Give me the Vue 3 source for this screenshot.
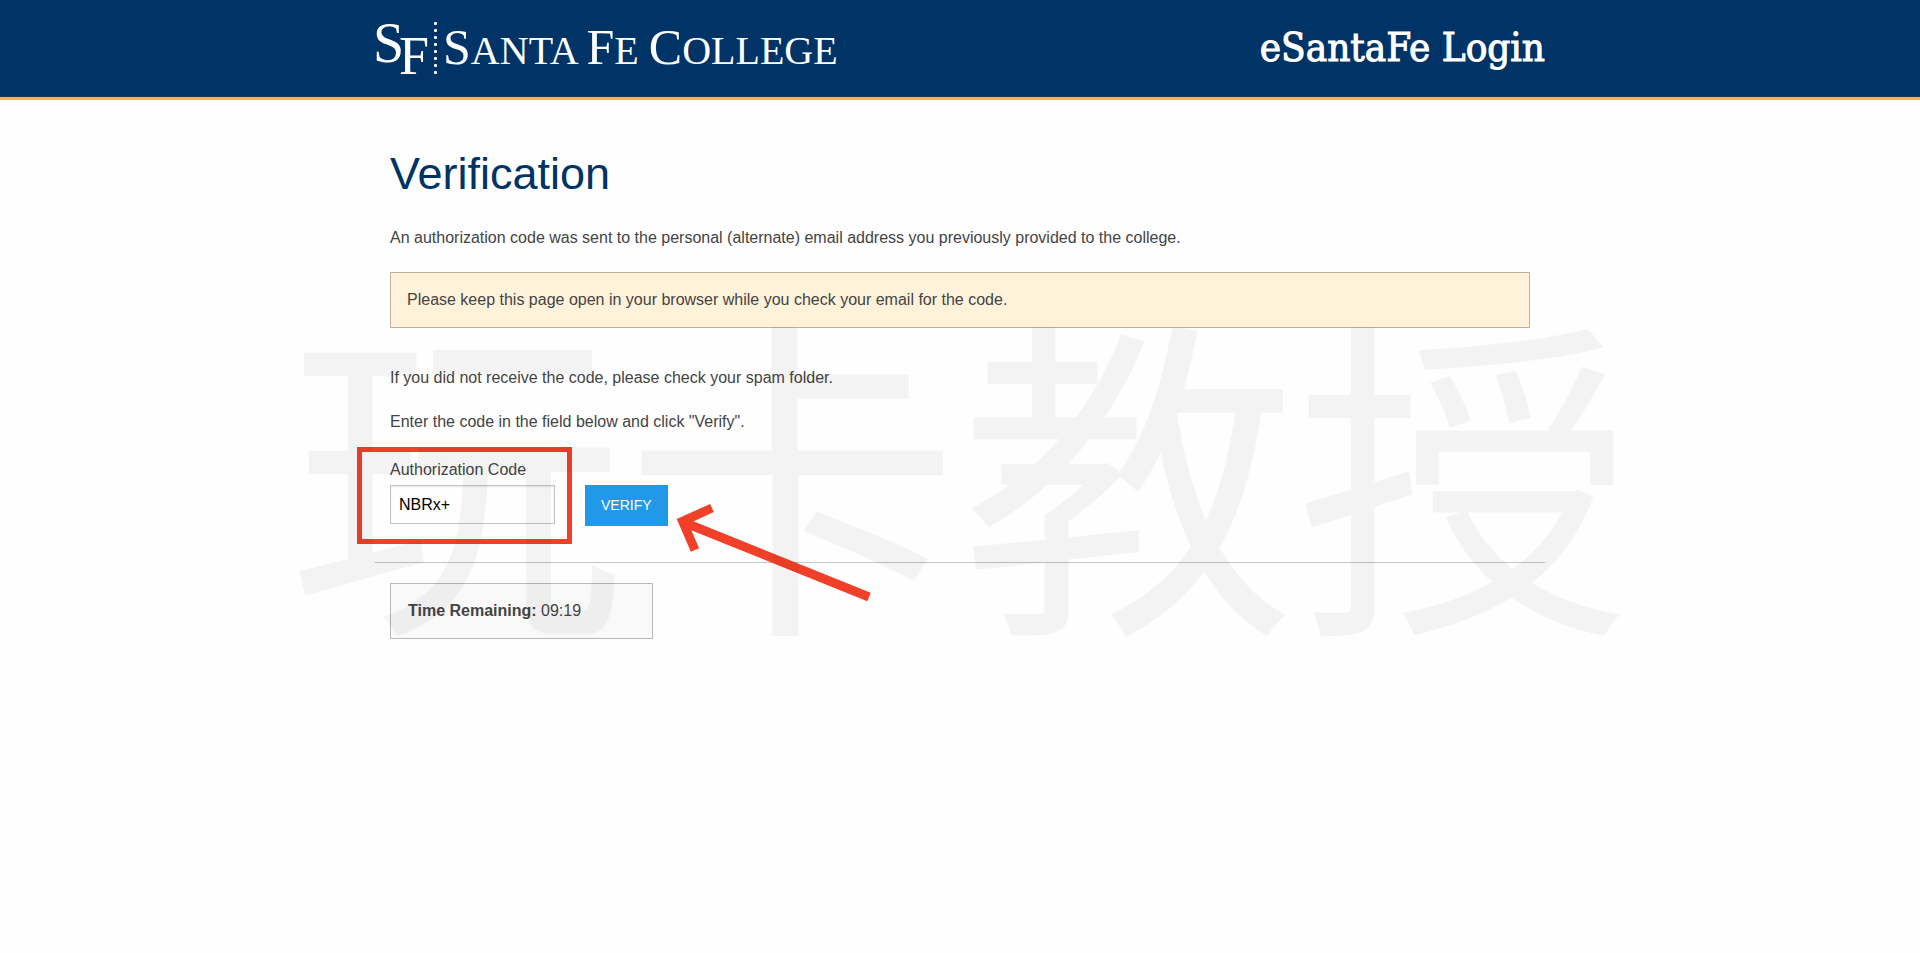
<script setup>
import { ref } from 'vue'

const code = ref('NBRx+')
const remaining = ref('09:19')
const dots = [0, 1, 2, 3, 4, 5, 6, 7]
</script>

<template>
  <div class="page">
    <header class="top">
      <div class="container top-row">
        <a class="logo" href="#" aria-label="Santa Fe College">
          <span class="mono-s">S</span><span class="mono-f">F</span>
          <span class="dots"><i v-for="d in dots" :key="d"></i></span>
          <span class="wordmark"><b>S</b>ANTA <b>F</b>E <b>C</b>OLLEGE</span>
        </a>
        <div class="site-title">eSantaFe Login</div>
      </div>
    </header>

    <main class="container">
      <div class="content">
        <h1>Verification</h1>
        <p>An authorization code was sent to the personal (alternate) email address you previously provided to the college.</p>
        <div class="alert">Please keep this page open in your browser while you check your email for the code.</div>
        <p>If you did not receive the code, please check your spam folder.</p>
        <p>Enter the code in the field below and click "Verify".</p>
        <form class="verify-form" @submit.prevent>
          <div class="field">
            <label for="code">Authorization Code</label>
            <input id="code" v-model="code" type="text" />
          </div>
          <button type="submit">VERIFY</button>
          <div class="highlight"></div>
          <svg class="arrow" width="210" height="110" viewBox="0 0 210 110" aria-hidden="true">
            <path d="M42 11L12.600 24.300L25 53M13 25L199 100" fill="none" />
          </svg>
        </form>
      </div>
      <hr />
      <div class="content">
        <div class="timer"><strong>Time Remaining:</strong> {{ remaining }}</div>
      </div>
    </main>

    <div class="watermark" aria-hidden="true">玩卡教授</div>
  </div>
</template>

<style>
body {
  margin: 0;
  background: #fefefe;
}
</style>

<style scoped>
.page {
  position: relative;
  overflow: hidden;
  min-height: 100vh;
  font: 16px/24px "Liberation Sans", Arial, sans-serif;
  color: #444;
}
.container {
  box-sizing: border-box;
  max-width: 1170px;
  margin: 0 auto;
}
.top {
  background: #003366;
  border-bottom: 3px solid #e9b949;
  box-shadow: inset 0 -1px 0 #24393e;
}
.top-row {
  display: flex;
  justify-content: space-between;
  align-items: flex-start;
  height: 97px;
}
.logo {
  display: flex;
  margin-left: -2px;
  padding-top: 17px;
  color: #fff;
  font-family: "Liberation Serif", "Times New Roman", serif;
  line-height: 60px;
  text-decoration: none;
}
.mono-s {
  width: 26px;
  font-size: 56px;
  line-height: 52px;
}
.mono-f {
  font-size: 54px;
  line-height: 78px;
}
.dots {
  display: flex;
  flex-direction: column;
  gap: 4px;
  padding-top: 5px;
  margin: 0 6px 0 5px;
}
.dots i {
  width: 3px;
  height: 3px;
  border-radius: 1px;
  background: #fff;
}
.wordmark {
  font-size: 40px;
  white-space: nowrap;
}
.wordmark b {
  font-size: 50px;
  font-weight: 400;
}
.site-title {
  padding-top: 17px;
  color: #fff;
  font-family: "DejaVu Serif Condensed", "DejaVu Serif", serif;
  font-size: 40px;
  line-height: 60px;
  white-space: nowrap;
  -webkit-text-stroke: 1px #fff;
}
.content {
  padding: 0 15px;
}
h1 {
  margin: 0;
  padding: 49px 0 27px;
  color: #003366;
  font-size: 45px;
  font-weight: 400;
  line-height: 50px;
}
p {
  margin: 0 0 20px;
}
.alert {
  margin: 22px 0 38px;
  padding: 15px 16px;
  border: 1px solid #bdb39c;
  background: #fff2da;
}
.verify-form {
  position: relative;
  display: flex;
  align-items: flex-end;
  gap: 30px;
  margin-top: 24px;
}
.field {
  display: flex;
  flex-direction: column;
  gap: 3px;
  margin-bottom: 2px;
}
input {
  box-sizing: border-box;
  width: 165px;
  height: 39px;
  padding: 0 8px;
  border: 1px solid #c4c4c4;
  background: #fefefe;
  box-shadow: inset 0 1px 2px rgba(0, 0, 0, 0.1);
  color: #000;
  font: inherit;
}
button {
  height: 41px;
  padding: 0 16px 2px;
  border: 0;
  background: #2199e8;
  color: #fefefe;
  font: 14px/20px "Liberation Sans", Arial, sans-serif;
}
.highlight {
  position: absolute;
  top: -11px;
  left: -33px;
  box-sizing: border-box;
  width: 215px;
  height: 97px;
  border: 5px solid #f04128;
  pointer-events: none;
}
.arrow {
  position: absolute;
  top: 39px;
  left: 280px;
  stroke: #f04128;
  stroke-width: 9;
  pointer-events: none;
}
hr {
  margin: 36px 0 20px;
  border: 0;
  border-top: 1px solid #c4c4c4;
}
.timer {
  box-sizing: border-box;
  width: 263px;
  max-width: 100%;
  padding: 15px 17px;
  border: 1px solid #b8b8b8;
  background: #f9f9f9;
}
.watermark {
  position: absolute;
  top: 295px;
  left: 50%;
  transform: translateX(-50%);
  color: rgba(0, 0, 0, 0.045);
  font-family: "Noto Sans CJK SC", sans-serif;
  font-size: 336px;
  line-height: 336px;
  white-space: nowrap;
  pointer-events: none;
}
</style>
